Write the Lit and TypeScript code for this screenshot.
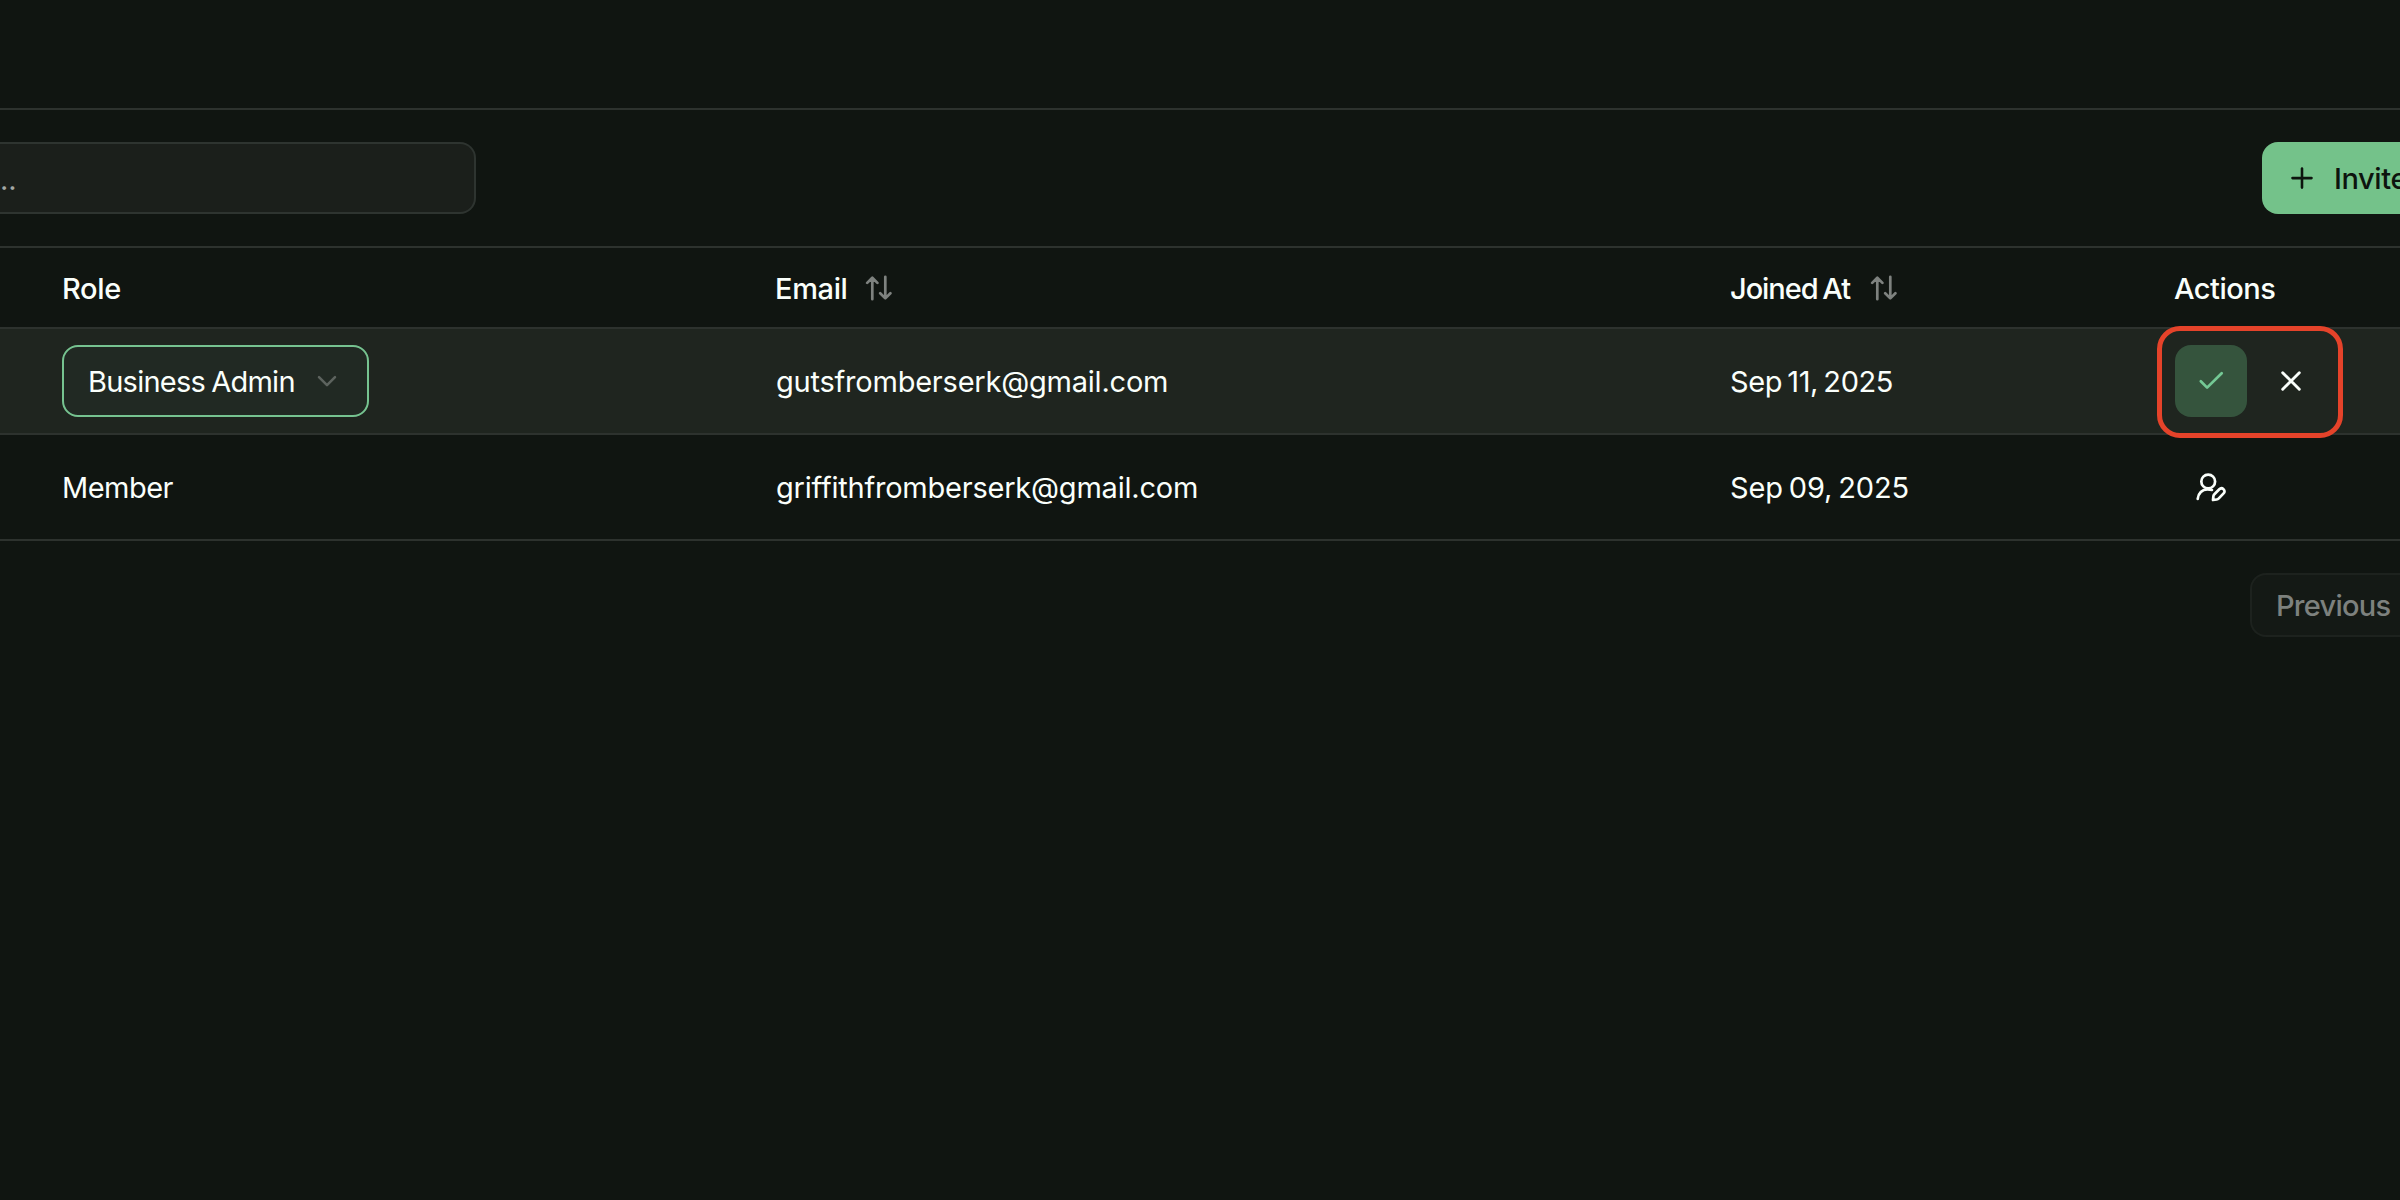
import { LitElement, html, css, svg, nothing } from "lit";
import { customElement, state } from "lit/decorators.js";
import { classMap } from "lit/directives/class-map.js";

interface Member {
  role: string;
  email: string;
  joined: string;
  joinedClass: string;
  editing: boolean;
}

const icon = (size: number, width: number, body: unknown) => html`<svg
  class="icon"
  width=${size}
  height=${size}
  viewBox="0 0 ${size} ${size}"
  stroke-width=${width}
>
  ${body}
</svg>`;

const sortIcon = icon(
  28,
  2.7,
  svg`<path d="M8.3 25.2V4.2M3.2 8.9L8.3 3.8L13.4 8.9M21.3 2.8V24.2M16.2 19.3L21.3 24.4L26.4 19.3" />`
);
const checkIcon = icon(32, 2.7, svg`<path d="M5.8 16.3L12.1 22.6L26.7 8.2" />`);
const closeIcon = icon(32, 2.9, svg`<path d="M7.7 7.7L24.3 24.3M24.3 7.7L7.7 24.3" />`);
const plusIcon = icon(28, 2.6, svg`<path d="M14 4.6V23.6M4.5 14.1H23.5" />`);
const chevronIcon = icon(28, 2.5, svg`<path d="M6 10.2L14 18.2L22 10.2" />`);
const editUserIcon = icon(
  32,
  2.7,
  svg`<circle cx="13.2" cy="10.5" r="6.9" />
    <path d="M2.7 27.8C3.2 22.2 7.2 18.3 12.4 18.3C14.2 18.3 15.6 18.4 17 18.9" />
    <path d="M18 29L18.4 25.2C18.5 24.4 18.8 23.8 19.4 23.2L24.3 18.3C25.6 17 27.3 17.1 28.5 18.2C29.8 19.4 29.9 21.1 28.6 22.4L23.8 27.4C23.2 28 22.5 28.4 21.7 28.5Z" />`
);

@customElement("app-root")
export class AppRoot extends LitElement {
  static styles = css`
    :host {
      display: block;
      height: 1200px;
      overflow: hidden;
      background: #101511;
      color: #fafffb;
      font: 400 29px/36px Inter, "Liberation Sans", sans-serif;
      --line: #2d322e;
    }
    * {
      box-sizing: border-box;
    }
    .icon {
      display: block;
      flex: none;
      fill: none;
      stroke: currentColor;
      stroke-linecap: round;
      stroke-linejoin: round;
    }
    .topbar {
      height: 110px;
      border-bottom: 2px solid var(--line);
    }
    .toolbar {
      display: flex;
      justify-content: space-between;
      height: 138px;
      padding: 32px 0;
      border-bottom: 2px solid var(--line);
    }
    .search {
      width: 476px;
      height: 72px;
      padding: 18px 0 0;
      border: 2px solid #2e3430;
      border-left: 0;
      border-radius: 0 16px 16px 0;
      background: #1b1f1b;
      color: #a3a7a4;
    }
    .invite {
      display: flex;
      align-items: center;
      gap: 18px;
      width: 138px;
      height: 72px;
      padding-left: 26px;
      border-radius: 16px 0 0 16px;
      background: #74c28a;
      color: #0d140e;
      font-weight: 500;
      letter-spacing: -0.4px;
      overflow: hidden;
    }
    .label {
      padding-top: 2px;
    }
    .row {
      display: grid;
      grid-template-columns: 713px 955px 445px 1fr;
      align-items: center;
      height: 106px;
      padding-left: 62px;
      border-bottom: 2px solid var(--line);
    }
    .row.head {
      height: 81px;
      font-weight: 500;
    }
    .row.editing {
      background: #1f251f;
    }
    .cell {
      display: flex;
      align-items: center;
      white-space: nowrap;
    }
    .sort {
      padding-top: 1px;
      color: #7e827f;
    }
    .h-role {
      letter-spacing: -0.3px;
    }
    .h-email {
      letter-spacing: -0.36px;
      margin-right: 16px;
    }
    .h-joined {
      letter-spacing: -1.05px;
      word-spacing: -2px;
      margin-right: 19px;
    }
    .h-actions {
      margin-left: -1px;
      letter-spacing: -0.48px;
    }
    .email {
      padding-left: 1px;
      letter-spacing: -0.22px;
    }
    .member {
      letter-spacing: -0.53px;
    }
    .narrow {
      letter-spacing: -0.42px;
      word-spacing: -2.4px;
    }
    .wide {
      letter-spacing: -0.15px;
      word-spacing: -2px;
    }
    .select {
      display: flex;
      align-items: center;
      justify-content: space-between;
      width: 307px;
      height: 72px;
      padding: 0 26px 0 24px;
      border: 2px solid #76c390;
      border-radius: 16px;
      background: #212923;
      letter-spacing: -0.76px;
      word-spacing: -1.2px;
    }
    .select .icon {
      color: #5d635e;
    }
    .actions {
      position: relative;
      gap: 8px;
    }
    .action {
      display: grid;
      place-items: center;
      width: 72px;
      height: 72px;
      border-radius: 16px;
    }
    .action.confirm {
      background: #35543d;
      color: #74c995;
    }
    .highlight {
      position: absolute;
      left: -18px;
      top: -19px;
      width: 186px;
      height: 112px;
      border: 5px solid #e5432a;
      border-radius: 23px;
    }
    .pager {
      display: flex;
      justify-content: flex-end;
      padding-top: 32px;
    }
    .previous {
      display: flex;
      align-items: center;
      width: 150px;
      height: 64px;
      padding: 1px 0 0 24px;
      border: 2px solid #1d221e;
      border-right: 0;
      border-radius: 16px 0 0 16px;
      background: #141915;
      color: #7d817e;
      font-weight: 500;
      letter-spacing: -0.74px;
    }
  `;

  @state() private members: Member[] = [
    { role: "Business Admin", email: "gutsfromberserk@gmail.com", joined: "Sep 11, 2025", joinedClass: "narrow", editing: true },
    { role: "Member", email: "griffithfromberserk@gmail.com", joined: "Sep 09, 2025", joinedClass: "wide", editing: false },
  ];

  private renderMember(m: Member) {
    return html`<div class=${classMap({ row: true, editing: m.editing })}>
      <div class="cell">
        ${m.editing
          ? html`<div class="select"><span class="label">${m.role}</span>${chevronIcon}</div>`
          : html`<span class="label member">${m.role}</span>`}
      </div>
      <div class="cell"><span class="label email">${m.email}</span></div>
      <div class="cell"><span class="label ${m.joinedClass}">${m.joined}</span></div>
      <div class="cell actions">
        ${m.editing
          ? html`<div class="action confirm">${checkIcon}</div>
              <div class="action">${closeIcon}</div>`
          : html`<div class="action">${editUserIcon}</div>`}
        ${m.editing ? html`<div class="highlight"></div>` : nothing}
      </div>
    </div>`;
  }

  render() {
    return html`
      <div class="topbar"></div>
      <div class="toolbar">
        <div class="search">..</div>
        <div class="invite">${plusIcon}<span class="label">Invite</span></div>
      </div>
      <div class="row head">
        <div class="cell"><span class="label h-role">Role</span></div>
        <div class="cell"><span class="label h-email">Email</span><span class="sort">${sortIcon}</span></div>
        <div class="cell"><span class="label h-joined">Joined At</span><span class="sort">${sortIcon}</span></div>
        <div class="cell"><span class="label h-actions">Actions</span></div>
      </div>
      ${this.members.map((m) => this.renderMember(m))}
      <div class="pager"><div class="previous">Previous</div></div>
    `;
  }
}
